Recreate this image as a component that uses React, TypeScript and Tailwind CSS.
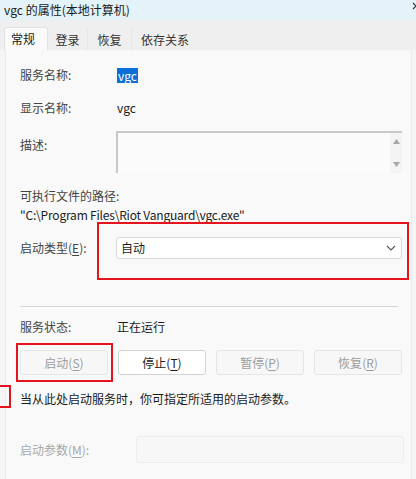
import React from "react";

const Key = ({ k }: { k: string }) => <span className="underline underline-offset-2">{k}</span>;

const Btn = ({ label, k, enabled }: { label: string; k: string; enabled?: boolean }) => (
  <div
    className={
      "w-[88px] h-[25px] flex items-center justify-center rounded-[3px] border text-[12px] " +
      (enabled
        ? "bg-white border-[#d3d3d3] text-[#1b1b1b]"
        : "bg-[#f7f7f7] border-[#e6e6e6] text-[#9d9d9d]")
    }
  >
    {label}(<Key k={k} />)
  </div>
);

export default function App() {
  return (
    <div
      className="relative w-[416px] h-[479px] overflow-hidden bg-[#f5f5f5] text-[#1b1b1b] flex flex-col"
      style={{ fontFamily: '"Noto Sans CJK SC", "Noto Sans", sans-serif' }}
    >
      {/* title bar */}
      <div className="h-[20px] shrink-0 bg-[#e4f3f9] flex items-center justify-between pl-[4px] text-[12px] leading-none">
        <span>vgc 的属性(本地计算机)</span>
        <svg width="8" height="10" viewBox="0 0 8 10" className="mr-[-4px] mb-[6px]">
          <path d="M1 1 L7 7 M7 1 L1 7" stroke="#333" strokeWidth="1.2" fill="none" />
        </svg>
      </div>

      {/* tabs */}
      <div className="h-[30px] shrink-0 bg-[#efefef] flex items-end pl-[4px] text-[12px]">
        <div className="w-[44px] h-[23px] bg-[#fafafa] border border-b-0 border-[#e2e2e2] rounded-t-[3px] flex items-center justify-center pr-[6px]">
          常规
        </div>
        <div className="w-[40px] h-[21px] flex items-center justify-center border-r border-[#e6e6e6] text-[#333]">登录</div>
        <div className="w-[44px] h-[21px] flex items-center justify-center border-r border-[#e6e6e6] text-[#333]">恢复</div>
        <div className="w-[66px] h-[21px] flex items-center justify-center text-[#333]">依存关系</div>
      </div>

      {/* panel */}
      <div className="flex-1 ml-[5px] mr-[4px] bg-[#f9f9f9] border-l border-r border-[#ebebeb] pl-[14px] pr-[7px] text-[12px] flex flex-col">
        <div className="mt-[15px] h-[20px] flex items-center">
          <span className="w-[96px] text-[#444]">服务名称:</span>
          <span className="ml-[1px] bg-[#0b6fd8] text-white px-[1px] leading-[15px]">vgc</span>
        </div>
        <div className="mt-[13px] h-[20px] flex items-center">
          <span className="w-[97px] text-[#444]">显示名称:</span>
          <span>vgc</span>
        </div>
        <div className="mt-[13px] flex items-start">
          <span className="w-[96px] text-[#444] pt-[4px] leading-[20px]">描述:</span>
          <div className="w-[286px] h-[42px] bg-[#fbfbfb] border-t-2 border-l-2 border-[#c9c9c9] flex justify-end">
            <div className="w-[12px] flex flex-col items-center justify-between py-[6px] bg-[#f4f4f4]">
              <svg width="7" height="5" viewBox="0 0 7 5"><path d="M0 5 L3.5 0 L7 5 Z" fill="#a8a8a8" /></svg>
              <svg width="7" height="5" viewBox="0 0 7 5"><path d="M0 0 L3.5 5 L7 0 Z" fill="#a8a8a8" /></svg>
            </div>
          </div>
        </div>
        <div className="mt-[13px] h-[20px] flex items-center text-[#444]">可执行文件的路径:</div>
        <div className="h-[18px] flex items-center tracking-[-0.2px]">"C:\Program Files\Riot Vanguard\vgc.exe"</div>
        <div className="mt-[13px] flex items-center">
          <span className="w-[96px] text-[#444]">
            启动类型(<Key k="E" />):
          </span>
          <div className="w-[286px] h-[22px] bg-white border border-[#dadada] rounded-[3px] flex items-center justify-between pl-[4px] pr-[5px]">
            <span>自动</span>
            <svg width="10" height="6" viewBox="0 0 10 6">
              <path d="M1 1 L5 5 L9 1" stroke="#555" strokeWidth="1.1" fill="none" />
            </svg>
          </div>
        </div>
        <div className="mt-[47px] h-px w-[378px] bg-[#d6d6d6]" />
        <div className="mt-[10px] h-[20px] flex items-center">
          <span className="w-[97px] text-[#444]">服务状态:</span>
          <span>正在运行</span>
        </div>
        <div className="mt-[13px] flex gap-[10px]">
          <Btn label="启动" k="S" />
          <Btn label="停止" k="T" enabled />
          <Btn label="暂停" k="P" />
          <Btn label="恢复" k="R" />
        </div>
        <div className="mt-[15px] h-[18px] flex items-center">当从此处启动服务时，你可指定所适用的启动参数。</div>
        <div className="mt-[28px] flex items-center">
          <span className="w-[116px] text-[#a8a8a8]">
            启动参数(<Key k="M" />):
          </span>
          <div className="w-[268px] h-[27px] bg-[#f7f7f7] border border-[#ececec] rounded-[3px]" />
        </div>
      </div>

      {/* red annotation boxes */}
      <div className="absolute left-[97px] top-[222px] w-[312px] h-[58px] border-2 border-[#e5131d]" />
      <div className="absolute left-[16px] top-[343px] w-[97px] h-[39px] border-2 border-[#e5131d]" />
      <div className="absolute left-[-4px] top-[385px] w-[15px] h-[23px] border-2 border-[#e5131d]" />
    </div>
  );
}
